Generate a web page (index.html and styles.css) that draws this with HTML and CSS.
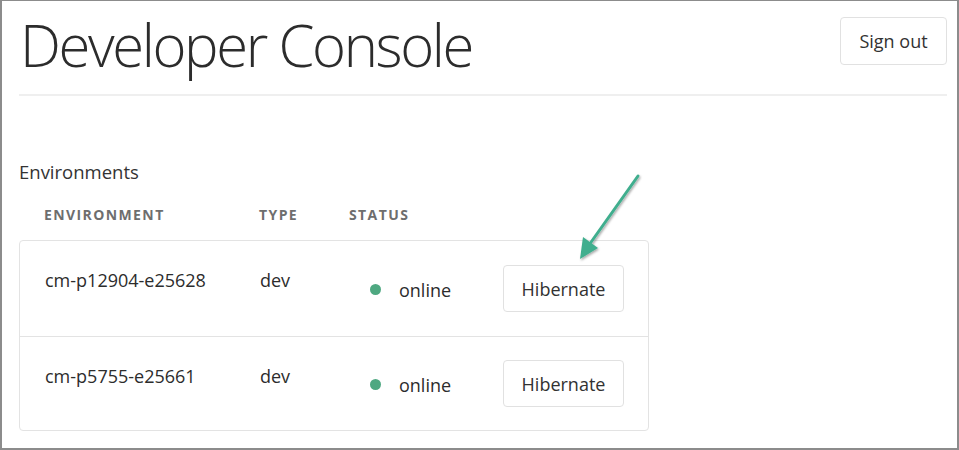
FILE: index.html
```html
<!DOCTYPE html>
<html>
<head>
<meta charset="utf-8">
<link rel="stylesheet" href="styles.css">
</head>
<body>
<div class="frame">
  <header class="top">
    <h1 class="title">Developer Console</h1>
    <button class="btn signout">Sign out</button>
  </header>
  <div class="rule"></div>
  <section class="envs">
    <h2 class="section-title">Environments</h2>
    <div class="thead">
      <div>ENVIRONMENT</div>
      <div>TYPE</div>
      <div>STATUS</div>
      <div></div>
    </div>
    <div class="table">
      <div class="row">
        <div class="cell name">cm-p12904-e25628</div>
        <div class="cell type">dev</div>
        <div class="cell status"><span class="dot"></span>online</div>
        <div class="cell action"><button class="btn">Hibernate</button></div>
      </div>
      <div class="row">
        <div class="cell name">cm-p5755-e25661</div>
        <div class="cell type">dev</div>
        <div class="cell status"><span class="dot"></span>online</div>
        <div class="cell action"><button class="btn">Hibernate</button></div>
      </div>
    </div>
  </section>
  <svg class="arrow" width="80" height="100" viewBox="0 0 80 100">
    <defs>
      <filter id="sh" x="-20%" y="-20%" width="140%" height="140%">
        <feDropShadow dx="1" dy="1.5" stdDeviation="1.2" flood-color="#000" flood-opacity="0.35"/>
      </filter>
    </defs>
    <g filter="url(#sh)">
      <line x1="66" y1="5" x2="17" y2="74" stroke="#3fae8e" stroke-width="3" stroke-linecap="round"/>
      <polygon points="8,88 11,66 26,77" fill="#3fae8e"/>
    </g>
  </svg>
</div>
</body>
</html>
```

FILE: styles.css
```css
* { box-sizing: border-box; }
html, body { margin: 0; padding: 0; background: #fff; }
body { font-family: "Open Sans", "Liberation Sans", sans-serif; color: #2c2c2c; }

.frame {
  position: relative;
  width: 959px;
  height: 450px;
  border-top: 1px solid #8c8c8c;
  border-left: 2px solid #8c8c8c;
  border-right: 2px solid #8c8c8c;
  border-bottom: 2px solid #8c8c8c;
  padding: 16px 10px 0 17px;
  overflow: hidden;
}

.top {
  display: flex;
  justify-content: space-between;
  align-items: flex-start;
  height: 77px;
}

.title {
  margin: 0;
  margin-top: -8px;
  font-weight: 300;
  font-size: 58px;
  line-height: 72px;
  letter-spacing: -2.4px;
  color: #2c2c2c;
  padding-left: 1px;
}

.btn {
  font-family: "Open Sans", "Liberation Sans", sans-serif;
  background: #fff;
  border: 1px solid #e1e1e1;
  border-radius: 4px;
  color: #323232;
  cursor: pointer;
}

.signout {
  width: 107px;
  height: 48px;
  font-size: 18px;
  padding: 0;
}

.rule {
  height: 2px;
  background: #efefef;
}

.envs { padding-top: 64px; }

.section-title {
  margin: 0;
  font-weight: 400;
  font-size: 18.5px;
  line-height: 24px;
  color: #333;
}

.thead, .row {
  display: grid;
  grid-template-columns: 215px 90px 153px 121px;
  padding-left: 25px;
}

.thead {
  margin-top: 22px;
  height: 34px;
  font-size: 14px;
  font-weight: 700;
  letter-spacing: 1.4px;
  color: #6e6e6e;
  line-height: 18px;
}

.table {
  width: 630px;
  border: 1px solid #e3e3e3;
  border-radius: 4px;
}

.row {
  height: 95px;
  align-items: center;
  font-size: 18px;
  color: #2c2c2c;
}
.row + .row { border-top: 1px solid #e3e3e3; height: 94px; }

.cell.name, .cell.type { align-self: start; padding-top: 27px; line-height: 24px; }

.cell.status {
  display: flex;
  align-items: center;
  padding-left: 20px;
  padding-top: 2px;
}
.dot {
  width: 11px;
  height: 11px;
  border-radius: 50%;
  background: #4ea881;
  margin-right: 18px;
}

.action .btn {
  width: 121px;
  height: 47px;
  font-size: 18px;
  padding: 0;
}

.arrow {
  position: absolute;
  left: 570px;
  top: 170px;
}
```
